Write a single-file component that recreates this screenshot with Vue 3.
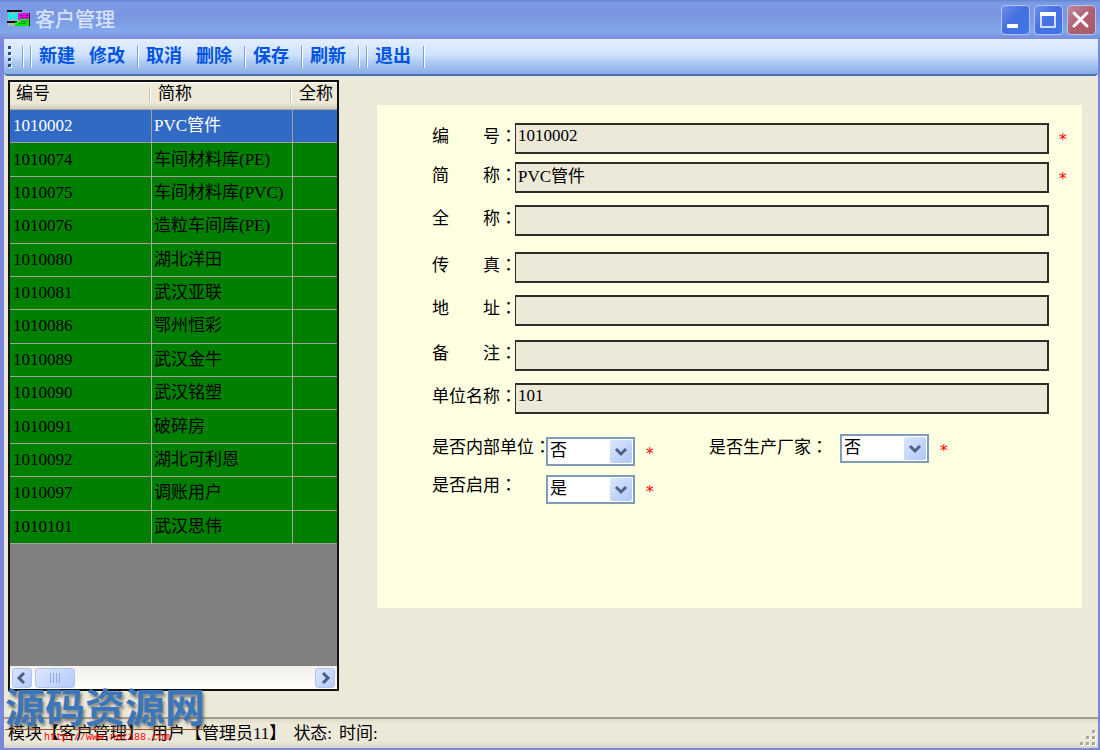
<script setup>
import { ref } from 'vue'

const toolbar = [
  ['新建', '修改'],
  ['取消', '删除'],
  ['保存'],
  ['刷新'],
]

const rows = [
  ['1010002', 'PVC管件'],
  ['1010074', '车间材料库(PE)'],
  ['1010075', '车间材料库(PVC)'],
  ['1010076', '造粒车间库(PE)'],
  ['1010080', '湖北洋田'],
  ['1010081', '武汉亚联'],
  ['1010086', '鄂州恒彩'],
  ['1010089', '武汉金牛'],
  ['1010090', '武汉铭塑'],
  ['1010091', '破碎房'],
  ['1010092', '湖北可利恩'],
  ['1010097', '调账用户'],
  ['1010101', '武汉思伟'],
]

const fields = ref([
  { id: 'code', label: '编　　号', value: '1010002', required: true, gap: 'tight' },
  { id: 'short', label: '简　　称', value: 'PVC管件', required: true, gap: 'normal' },
  { id: 'full', label: '全　　称', value: '', gap: 'wide' },
  { id: 'fax', label: '传　　真', value: '', gap: 'normal' },
  { id: 'address', label: '地　　址', value: '', gap: 'medium' },
  { id: 'remark', label: '备　　注', value: '', gap: 'normal' },
  { id: 'unit', label: '单位名称', value: '101', gap: 'last' },
])

const internal = ref('否')
const producer = ref('否')
const enabled = ref('是')
const selected = ref(0)
</script>

<template>
  <div class="window">
    <header class="titlebar">
      <svg class="app-icon" width="24" height="20" viewBox="0 0 24 20" shape-rendering="crispEdges" aria-hidden="true">
        <rect x="1" y="2" width="13" height="15" fill="#b4b4b4" />
        <rect x="0" y="1" width="15" height="2" fill="#111" />
        <rect x="0" y="12" width="10" height="2" fill="#111" />
        <path d="M1 3h3v4h1V5h2v2h1V3h3v5h-1v3H7V9H5v2H2V8H1z" fill="#00f0f8" />
        <rect x="11" y="4" width="11" height="7" fill="#f000e8" />
        <path d="M13 6h3v1h-3zM18 6h3v1h-3zM14 8h2v1h-2zM18 8h3v1h-3z" fill="#7a1070" />
        <path d="M12 10h10v7H8v-4h4z" fill="#00e810" />
        <path d="M14 12h6v1h-6zM12 14h7v1h-7z" fill="#0a8a20" />
        <rect x="22" y="4" width="1" height="13" fill="#222" />
      </svg>
      <h1>客户管理</h1>
      <div class="window-buttons">
        <button type="button" aria-label="最小化">
          <svg width="26" height="26" viewBox="0 0 26 26"><rect x="5" y="17" width="11" height="4" fill="#fff" /></svg>
        </button>
        <button type="button" aria-label="最大化">
          <svg width="26" height="26" viewBox="0 0 26 26"><path d="M6 6h14v14H6z" fill="none" stroke="#fff" stroke-width="1.500" /><path d="M5 5h16v4H5z" fill="#fff" /></svg>
        </button>
        <button type="button" class="close" aria-label="关闭">
          <svg width="26" height="26" viewBox="0 0 26 26"><path d="M6 6l13 13m0-13l-13 13" stroke="#fff" stroke-width="3" stroke-linecap="round" /></svg>
        </button>
      </div>
    </header>

    <div class="client">
      <nav class="toolbar">
        <span class="grip"><i></i><i></i><i></i><i></i></span>
        <span class="sep"></span>
        <template v-for="(group, g) in toolbar" :key="g">
          <span class="sep"></span>
          <button v-for="name in group" :key="name" type="button">{{ name }}</button>
        </template>
        <span class="sep"></span>
        <span class="sep"></span>
        <button type="button">退出</button>
        <span class="sep"></span>
      </nav>

      <main>
        <section class="grid">
          <table>
            <colgroup><col class="c1" /><col class="c2" /><col /></colgroup>
            <thead>
              <tr><th>编号</th><th>简称</th><th>全称</th></tr>
            </thead>
            <tbody>
              <tr v-for="(row, i) in rows" :key="row[0]" :class="{ selected: i === selected }" @click="selected = i">
                <td>{{ row[0] }}</td><td>{{ row[1] }}</td><td></td>
              </tr>
            </tbody>
          </table>
          <div class="scrollbar">
            <button type="button" aria-label="向左"><svg width="20" height="20" viewBox="0 0 20 20"><path d="M12 5l-5 5 5 5" /></svg></button>
            <div class="thumb"><i></i><i></i><i></i><i></i></div>
            <button type="button" class="right" aria-label="向右"><svg width="20" height="20" viewBox="0 0 20 20"><path d="M8 5l5 5-5 5" /></svg></button>
          </div>
        </section>

        <form class="panel" @submit.prevent>
          <div v-for="f in fields" :key="f.id" class="field" :class="f.gap">
            <label :for="f.id">{{ f.label }}<span class="colon">：</span></label>
            <input :id="f.id" v-model="f.value" type="text" />
            <span class="star">{{ f.required ? '*' : '' }}</span>
          </div>

          <div class="choices">
            <div class="choice">
              <label for="internal">是否内部单位<span class="colon">：</span></label>
              <span class="combo">
                <select id="internal" v-model="internal"><option>否</option><option>是</option></select>
                <svg width="22" height="23" viewBox="0 0 22 23"><path d="M6 9l5 5 5-5" /></svg>
              </span>
              <span class="star">*</span>
            </div>
            <div class="choice second">
              <label for="producer">是否生产厂家<span class="colon">：</span></label>
              <span class="combo">
                <select id="producer" v-model="producer"><option>否</option><option>是</option></select>
                <svg width="22" height="23" viewBox="0 0 22 23"><path d="M6 9l5 5 5-5" /></svg>
              </span>
              <span class="star">*</span>
            </div>
            <div class="choice">
              <label for="enabled">是否启用<span class="colon">：</span></label>
              <span class="combo">
                <select id="enabled" v-model="enabled"><option>是</option><option>否</option></select>
                <svg width="22" height="23" viewBox="0 0 22 23"><path d="M6 9l5 5 5-5" /></svg>
              </span>
              <span class="star">*</span>
            </div>
          </div>
        </form>
      </main>

      <footer class="status">
        <span>模块【客户管理】</span><span>用户【管理员11】</span><span>状态:</span><span>时间:</span>
        <svg class="resize" width="16" height="16" viewBox="0 0 16 16" aria-hidden="true">
          <g fill="#fff"><path d="M13 1h3v3h-3zM7 7h3v3H7zM13 7h3v3h-3zM1 13h3v3H1zM7 13h3v3H7zM13 13h3v3h-3z" /></g>
          <g fill="#aaa797"><path d="M12 0h3v3h-3zM6 6h3v3H6zM12 6h3v3h-3zM0 12h3v3H0zM6 12h3v3H6zM12 12h3v3h-3z" /></g>
        </svg>
      </footer>
    </div>

    <div class="watermark">
      <strong>源码资源网</strong>
      <span>http://www.net188.com</span>
    </div>
  </div>
</template>

<style>
html,
body {
  margin: 0;
}
</style>

<style scoped>
.window {
  position: relative;
  box-sizing: border-box;
  min-height: 100vh;
  display: flex;
  flex-direction: column;
  padding: 0 2px 2px 4px;
  background: #7888dc;
  color: #000;
  font: 17px/24px "Liberation Serif", "Noto Sans CJK SC", sans-serif;
}
.window * {
  box-sizing: border-box;
}
button,
input,
select {
  font: inherit;
  margin: 0;
}
svg {
  display: block;
}

.titlebar {
  display: flex;
  align-items: center;
  height: 39px;
  margin: 0 -2px 0 -4px;
  padding: 0 4px 0 7px;
  background: linear-gradient(#6288cc 0, #7c9ae4 3px, #7b96e0 14px, #7d9fe6 24px, #82a8ea 32px, #7b8ddf 38px);
}
.app-icon {
  margin-top: -2px;
}
h1 {
  flex: 1;
  margin: 0 0 0 4px;
  color: #d5e2fb;
  font-size: 20px;
  font-weight: 500;
}
.window-buttons {
  display: flex;
  gap: 4px;
}
.window-buttons button {
  width: 29px;
  height: 30px;
  padding: 1px 0;
  border: 1px solid #b4c4f2;
  border-radius: 4px;
  background: linear-gradient(135deg, #6f8fe8, #4470e2 45%, #3e78ea);
}
.window-buttons .close {
  background: linear-gradient(135deg, #c08a9c, #b0606e 50%, #a95a64);
}

.client {
  flex: 1;
  display: flex;
  flex-direction: column;
  background: #ece9d8;
}
.toolbar {
  display: flex;
  align-items: center;
  height: 37px;
  padding: 0 0 1px 4px;
  background: linear-gradient(#e3efff, #cfe2fd 45%, #b0ccf4 65%, #88ade4);
  border-bottom: 2px solid #4470b4;
  border-radius: 0 0 4px 4px;
}
.grip {
  display: flex;
  flex-direction: column;
  gap: 3px;
  margin-right: 5px;
}
.grip i {
  width: 3px;
  height: 3px;
  background: #2c4a8e;
  box-shadow: 1px 1px #fff;
}
.sep {
  width: 2px;
  height: 22px;
  margin: 2px 0 0 6px;
  background: linear-gradient(90deg, #7c9ed4 50%, #fff 50%);
}
.toolbar button + .sep {
  margin-left: 5px;
}
.toolbar button {
  padding: 0 7px;
  border: 0;
  background: none;
  color: #0054e3;
  font-size: 18px;
  font-weight: 700;
}

main {
  flex: 1;
  display: flex;
  padding: 4px 16px 26px 4px;
}
.grid {
  flex: none;
  width: 331px;
  display: flex;
  flex-direction: column;
  border: 2px solid #111;
  background: #808080;
}
table {
  width: 100%;
  height: 462px;
  table-layout: fixed;
  border-collapse: separate;
  border-spacing: 0;
}
.c1 {
  width: 142px;
}
.c2 {
  width: 141px;
}
th {
  height: 28px;
  padding: 0 0 3px 6px;
  border-bottom: 1px solid #aca899;
  background:
    linear-gradient(90deg, #c8c4b4 50%, #fff 50%) right 1px top 5px / 2px 15px no-repeat,
    linear-gradient(#fff 0, #ece9d8 2px, #ece9d8 21px, #cbc7b8 28px);
  font-weight: 400;
  text-align: left;
  white-space: nowrap;
}
th:last-child {
  background: linear-gradient(#fff 0, #ece9d8 2px, #ece9d8 21px, #cbc7b8 28px);
}
td {
  padding: 0 0 0 3px;
  border-right: 1px solid #a5a294;
  border-bottom: 1px solid #a5a294;
  background: #008000;
  white-space: nowrap;
}
td + td {
  padding-left: 2px;
}
td:last-child {
  border-right: 0;
}
.selected td {
  background: #316ac5;
  color: #fff;
}
.scrollbar {
  display: flex;
  align-items: center;
  height: 23px;
  margin-top: auto;
  padding: 0 2px;
  background: linear-gradient(#f1f0ea, #fefefb);
}
.scrollbar button,
.thumb {
  height: 20px;
  padding: 0;
  border: 1px solid #b2c4f0;
  border-radius: 3px;
  background: linear-gradient(135deg, #dce6ff, #b6cbf8);
}
.scrollbar button {
  width: 20px;
}
.scrollbar .right {
  margin-left: auto;
}
.scrollbar path,
.combo path {
  fill: none;
  stroke: #4d6185;
  stroke-width: 3;
}
.scrollbar svg {
  margin: -1px;
}
.thumb {
  display: flex;
  justify-content: center;
  align-items: center;
  gap: 2px;
  width: 40px;
  margin-left: 3px;
}
.thumb i {
  width: 1px;
  height: 10px;
  background: #8caae8;
}

.panel {
  flex: 1;
  min-width: 0;
  margin: 25px 0 83px 38px;
  padding: 18px 0 0 55px;
  background: #ffffe1;
}
.field {
  display: flex;
}
.field label {
  flex: none;
  width: 83px;
  white-space: nowrap;
}
.colon {
  font-family: "Noto Sans CJK TC", sans-serif;
}
.field input {
  flex: 1;
  min-width: 0;
  height: 31px;
  padding: 0 0 6px 2px;
  border: 2px solid #2e2d29;
  border-width: 2px 2px 2px 1px;
  border-radius: 0;
  background: #ece9d8;
  color: #000;
}
.star {
  width: 33px;
  padding: 5px 0 0 9px;
  color: #f00;
  font-family: "DejaVu Sans Mono", monospace;
  font-size: 16px;
}
.tight { margin-bottom: 8px; }
.normal { margin-bottom: 12px; }
.medium { margin-bottom: 14px; }
.wide { margin-bottom: 16px; }
.last { margin-bottom: 20px; }

.choices {
  display: grid;
  grid-template-columns: 277px 1fr;
  row-gap: 6px;
}
.choice {
  display: flex;
}
.choice label {
  flex: none;
  width: 114px;
  white-space: nowrap;
}
.choice.second label {
  width: 131px;
}
.combo {
  position: relative;
  flex: none;
  width: 89px;
  height: 29px;
  margin-top: 3px;
}
.second .combo {
  margin-top: 0;
}
.choice .star {
  padding: 8px 0 0 10px;
}
.second .star {
  padding-top: 5px;
}
.combo select {
  width: 100%;
  height: 100%;
  padding: 0 24px 3px 2px;
  border: 2px solid #7f9db9;
  border-radius: 0;
  background: #fff;
  color: #000;
  appearance: none;
}
.combo svg {
  position: absolute;
  top: 3px;
  right: 3px;
  border-radius: 2px;
  background: linear-gradient(135deg, #dce6ff, #aec6f8);
  pointer-events: none;
}

.status {
  display: flex;
  align-items: center;
  gap: 7px;
  height: 31px;
  padding: 0 2px 0 4px;
  border-top: 2px solid #a19d8e;
  background: linear-gradient(#dedbcb, #ece9d8 5px, #ece9d8 22px, #d8d4c3);
  white-space: nowrap;
}
.resize {
  margin: 8px 0 0 auto;
}

.watermark {
  position: absolute;
  left: 5px;
  bottom: 4px;
  display: flex;
  flex-direction: column;
  pointer-events: none;
}
.watermark strong {
  border-bottom: 1px solid #a0521c;
  color: #3b76bb;
  font: 700 40px/48px "Noto Sans CJK SC", sans-serif;
  text-shadow: 2px 3px 3px rgba(70, 70, 70, 0.6);
}
.watermark span {
  padding-left: 39px;
  color: #f00;
  font: 10px/16px "Liberation Mono", monospace;
}
</style>
